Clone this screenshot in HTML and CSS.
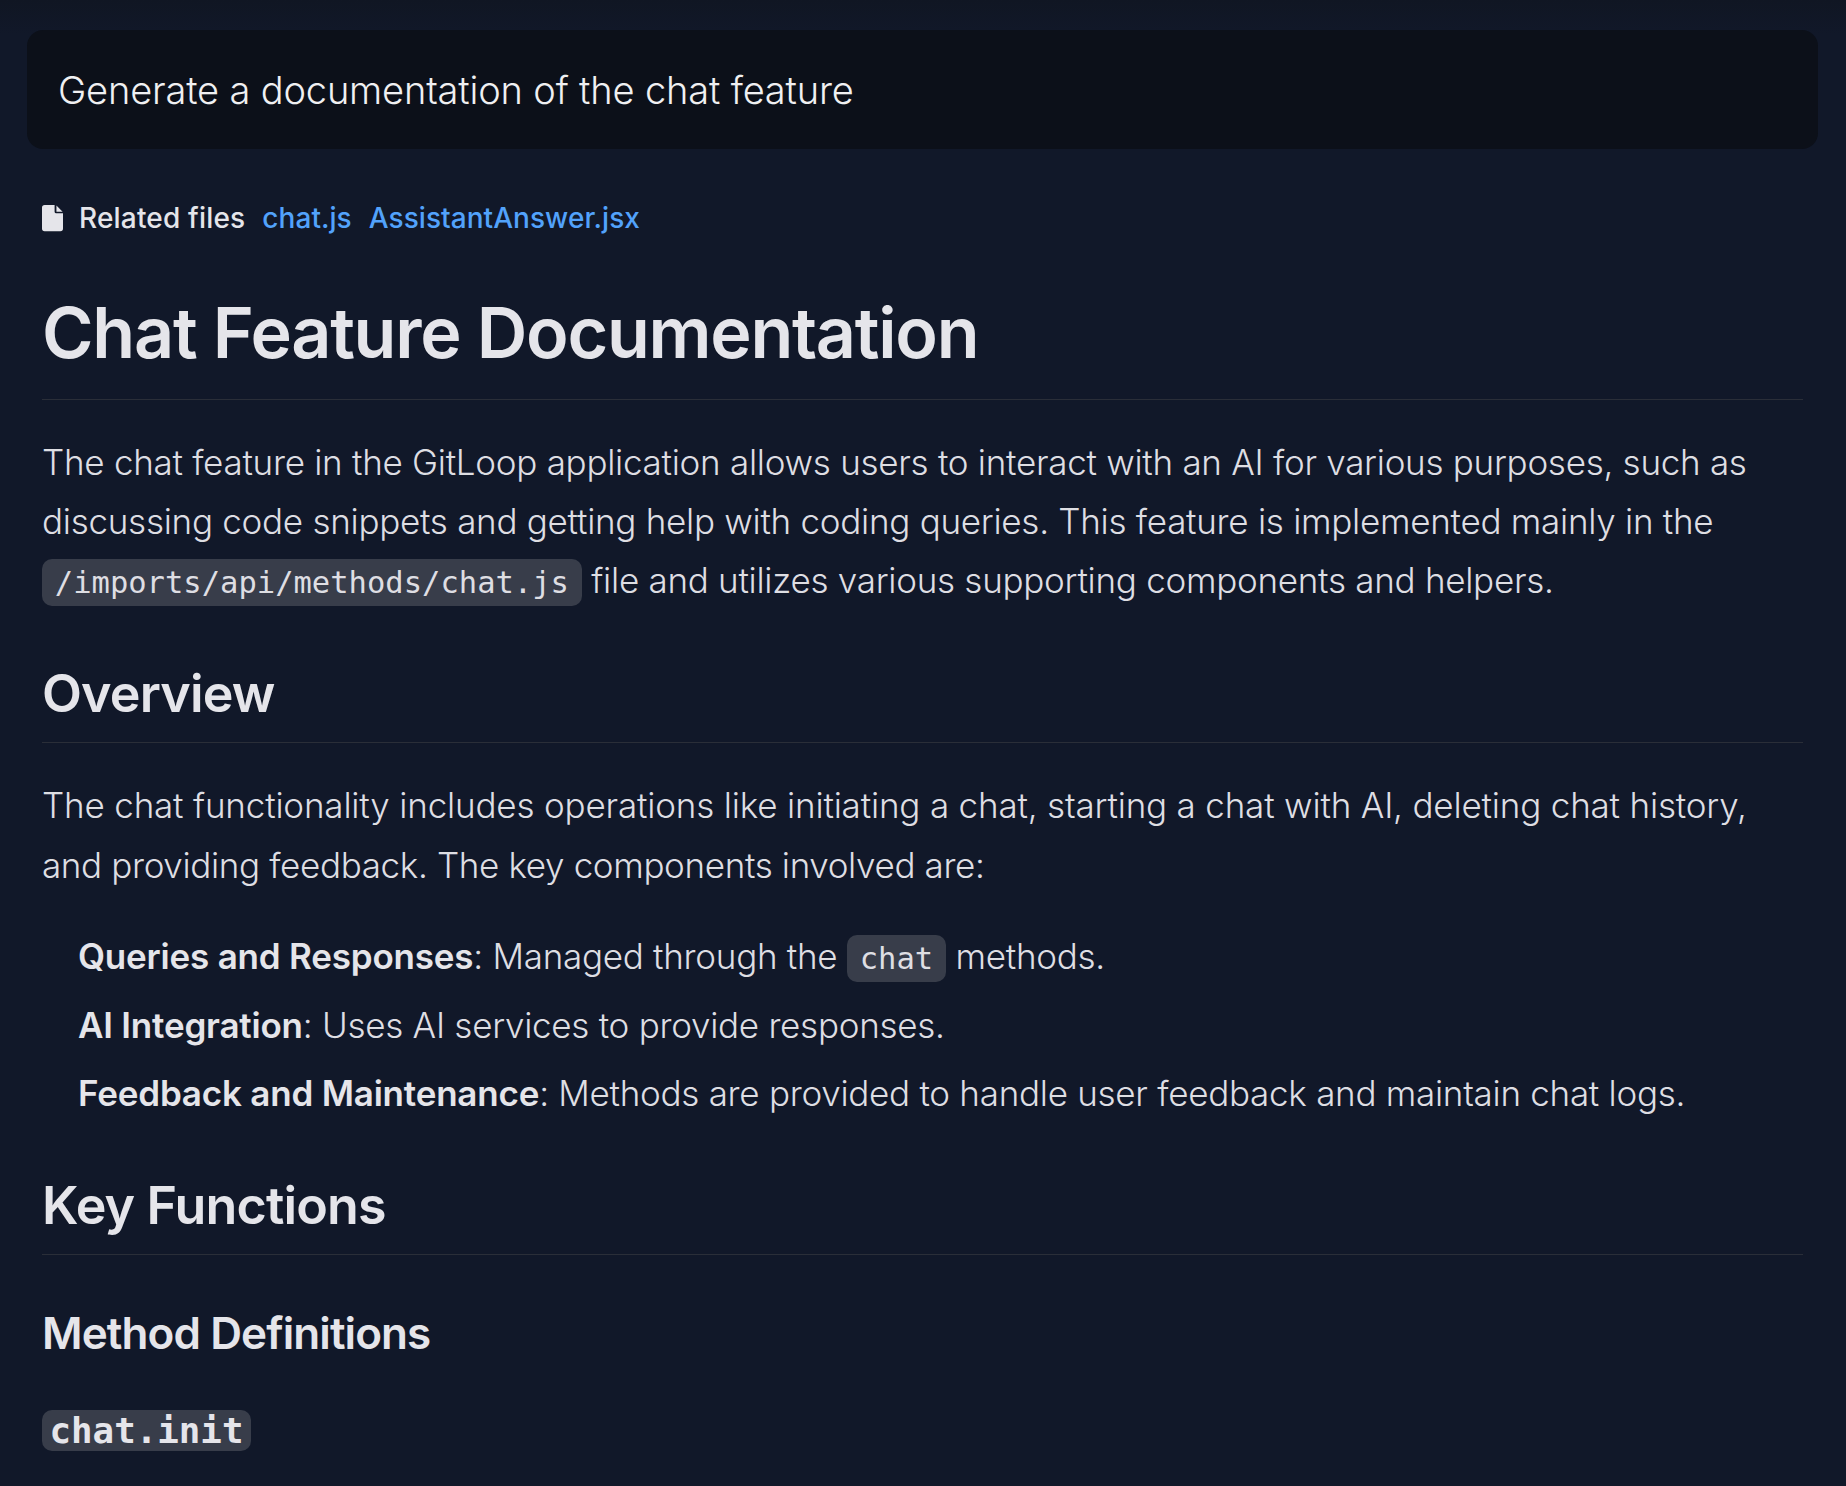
FILE: index.html
```html
<!DOCTYPE html>
<html lang="en">
<head>
<meta charset="utf-8">
<title>Chat Feature Documentation</title>
<link rel="stylesheet" href="styles.css">
</head>
<body>
<main class="page">
  <div class="prompt">Generate a documentation of the chat feature</div>
  <div class="answer">
    <div class="related">
      <svg class="file-icon" viewBox="0 0 16 20" aria-hidden="true"><path d="M2 0H9.6V5.2A1.2 1.2 0 0 0 10.8 6.4H16V18A2 2 0 0 1 14 20H2A2 2 0 0 1 0 18V2A2 2 0 0 1 2 0ZM11 0.4L15.7 5.2H11Z"/></svg>
      <span class="related-label">Related files</span>
      <a class="related-link">chat.js</a>
      <a class="related-link">AssistantAnswer.jsx</a>
    </div>
    <h1>Chat Feature Documentation</h1>
    <p>The chat feature in the GitLoop application allows users to interact with an AI for various purposes, such as discussing code snippets and getting help with coding queries. This feature is implemented mainly in the <code>/imports/api/methods/chat.js</code> file and utilizes various supporting components and helpers.</p>
    <h2>Overview</h2>
    <p class="overview-text"><span class="loose">The chat functionality includes operations like initiating a chat, starting a chat with AI, deleting chat history,</span> <span class="tight">and providing feedback. The key components involved are:</span></p>
    <ul>
      <li><strong>Queries and Responses</strong>: Managed through the <code>chat</code> methods.</li>
      <li><strong>AI Integration</strong>: Uses AI services to provide responses.</li>
      <li><strong>Feedback and Maintenance</strong>: Methods are provided to handle user feedback and maintain chat logs.</li>
    </ul>
    <h2>Key Functions</h2>
    <h3>Method Definitions</h3>
    <h4><code>chat.init</code></h4>
  </div>
</main>
</body>
</html>
```
FILE: styles.css
```css
html, body { margin: 0; padding: 0; }
body {
  height: 1486px;
  overflow: hidden;
  background: linear-gradient(#101623, #111829 34px);
  color: #e5e5ea;
  font-family: Inter, "Liberation Sans", sans-serif;
}
.page { padding: 30px 28px 0 27px; }
.prompt {
  height: 119px;
  box-sizing: border-box;
  padding: 0 31px;
  display: flex;
  align-items: center;
  background: #0c1019;
  border-radius: 16px;
  color: #f0f0f2;
  font-size: 38px;
  letter-spacing: -0.16px;
  font-weight: 300;
}
.answer { padding: 0 15px; }
.related {
  display: flex;
  align-items: center;
  gap: 17px;
  margin-top: 53px;
  height: 32px;
  font-size: 28px;
  font-weight: 500;
}
.related-label { letter-spacing: 0.18px; }
.file-icon { width: 21px; height: 28px; fill: #e5e5ea; margin-right: -1px; }
.related-link { color: #52a2fb; letter-spacing: 0.05px; }
h1 {
  margin: 58px 0 0;
  padding-bottom: 25px;
  border-bottom: 1px solid #2a2e38;
  font-size: 70px;
  letter-spacing: -1.25px;
  line-height: 82px;
  font-weight: 600;
}
h2 {
  margin: 53px 0 0;
  padding-bottom: 17px;
  border-bottom: 1px solid #2a2e38;
  font-size: 52px;
  letter-spacing: -0.85px;
  line-height: 62px;
  font-weight: 600;
}
h3 { margin: 52px 0 0; font-size: 44px; letter-spacing: -0.9px; line-height: 52px; font-weight: 600; }
h4 { margin: 54px 0 0; line-height: 48px; font-weight: 700; }
p { margin: 33px 0 0; font-size: 35px; letter-spacing: -0.277px; line-height: 59px; font-weight: 300; color: #dedee3; }
.overview-text { margin-top: 32px; line-height: 60px; }
.loose { letter-spacing: -0.184px; }
.tight { letter-spacing: -0.36px; }
ul { margin: 32px 0 0; padding: 0 0 0 36px; list-style: none; font-size: 35px; letter-spacing: -0.277px; line-height: 59px; font-weight: 300; color: #dedee3; }
li { margin-bottom: 9.5px; }
ul + h2 { margin-top: 52px; }
strong { font-weight: 600; color: #e5e5ea; letter-spacing: -0.2px; }
code {
  font-family: "DejaVu Sans Mono", monospace;
  font-size: 30.5px;
  letter-spacing: 0;
  line-height: 1;
  font-weight: 400;
  background: #383d4a;
  border-radius: 10px;
  padding: 5.6px 12.8px;
}
h4 code { font-size: 35.8px; font-weight: 700; padding: 0 7.5px; color: #e5e5ea; }
```
